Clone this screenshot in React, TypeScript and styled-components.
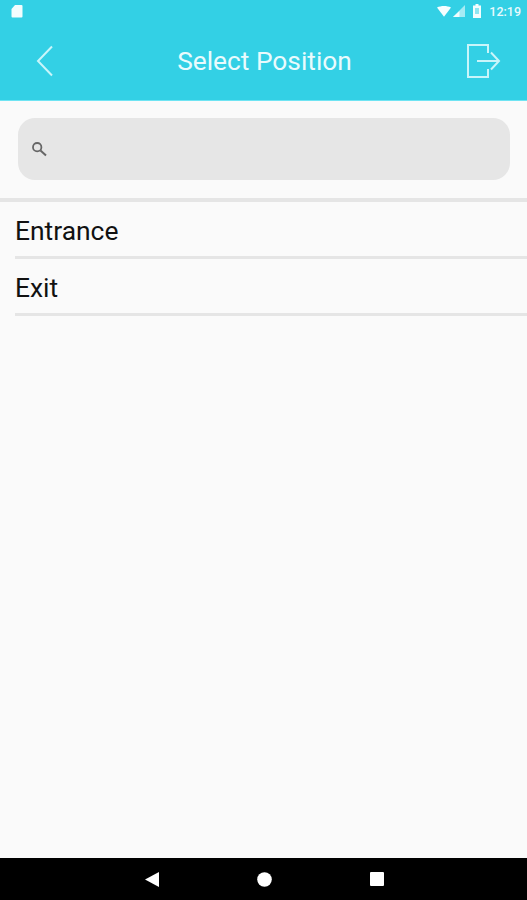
import React from "react";
import styled, { createGlobalStyle } from "styled-components";

const Global = createGlobalStyle`
  html, body { margin: 0; padding: 0; background: #fafafa; }
  #root { width: 527px; height: 900px; }
`;

const Screen = styled.div`
  width: 527px;
  height: 900px;
  display: flex;
  flex-direction: column;
  overflow: hidden;
  background: #fafafa;
  font-family: Roboto, "Liberation Sans", sans-serif;
`;

const Header = styled.header`
  height: 100px;
  flex: none;
  display: flex;
  flex-direction: column;
  background: #33d0e5;
  border-bottom: 1px solid #6fe4f3;
  box-sizing: content-box;
`;

const StatusBar = styled.div`
  height: 22px;
  flex: none;
  display: flex;
  align-items: center;
  justify-content: space-between;
  padding: 0 6px 0 11px;
`;

const StatusRight = styled.div`
  display: flex;
  align-items: center;
`;

const Clock = styled.span`
  color: #e6fafd;
  font-size: 12.5px;
  font-weight: 500;
  margin-left: 8px;
`;

const TitleBar = styled.div`
  flex: 1;
  display: flex;
  align-items: center;
  justify-content: space-between;
  padding: 0 26px 0 36px;
  margin-top: -1px;
`;

const BackIcon = styled.svg`
  margin-right: 10px;
`;

const Title = styled.h1`
  margin: 0;
  color: #e9fbfd;
  font-size: 26.3px;
  font-weight: 400;
  line-height: 32px;
`;

const SearchWrap = styled.div`
  flex: none;
  height: 101px;
  box-sizing: border-box;
  padding: 17px 17px 0 18px;
  border-bottom: 4px solid #e5e5e5;
`;

const SearchBox = styled.div`
  height: 62px;
  box-sizing: border-box;
  display: flex;
  align-items: center;
  padding-left: 13px;
  border-radius: 17px;
  background: #e6e6e6;
`;

const List = styled.ul`
  margin: 0;
  padding: 0 0 0 15px;
  list-style: none;
`;

const Row = styled.li`
  height: 57px;
  box-sizing: border-box;
  display: flex;
  align-items: center;
  padding-top: 3px;
  border-bottom: 3px solid #e5e5e5;
  color: #111;
  font-size: 26.4px;
  line-height: 32px;
`;

const Spacer = styled.div`
  flex: 1;
`;

const NavBar = styled.nav`
  flex: none;
  height: 42px;
  box-sizing: border-box;
  padding-left: 1px;
  display: flex;
  align-items: center;
  justify-content: center;
  gap: 98px;
  background: #000;
`;

export default function App() {
  return (
    <>
      <Global />
      <Screen>
        <Header>
          <StatusBar>
            <svg width="12" height="14" viewBox="0 0 12 14">
              <path d="M4 1h6.500a1 1 0 0 1 1 1v10.500a1 1 0 0 1-1 1h-9a1 1 0 0 1-1-1V5z" fill="#f2fdfe" />
            </svg>
            <StatusRight>
              <svg width="14" height="11" viewBox="0 0 16 12">
                <path d="M0 1.500C4.500-.8 11.500-.8 16 1.500L8 12z" fill="#f6feff" />
              </svg>
              <svg width="12" height="12" viewBox="0 0 13 13" style={{ marginLeft: 2 }}>
                <path d="M13 0v13H0z" fill="#a5ebf4" />
                <path d="M7 6.500V13H0z" fill="#f0fdfe" />
              </svg>
              <svg width="8" height="14" viewBox="0 0 8 14" style={{ marginLeft: 8 }}>
                <path d="M2.500 0h3v1.500H8V14H0V1.500h2.500z" fill="#f2fdfe" />
                <rect x="2" y="4" width="4" height="6" fill="#8fe6f1" />
              </svg>
              <Clock>12:19</Clock>
            </StatusRight>
          </StatusBar>
          <TitleBar>
            <BackIcon width="18" height="32" viewBox="0 0 18 32">
              <path d="M16 1.500 2 16l14 14.500" fill="none" stroke="#c9f5fa" strokeWidth="2" />
            </BackIcon>
            <Title>Select Position</Title>
            <svg width="36" height="36" viewBox="0 0 36 36">
              <path d="M23 10V2H3v32h20v-8" fill="none" stroke="#c9f5fa" strokeWidth="2" />
              <path d="M12 18h22M26 9.500l8 8.500-8 8.500" fill="none" stroke="#c9f5fa" strokeWidth="2" />
            </svg>
          </TitleBar>
        </Header>
        <SearchWrap>
          <SearchBox>
            <svg width="16" height="16" viewBox="0 0 16 16">
              <circle cx="6.200" cy="6.200" r="4.200" fill="none" stroke="#666" strokeWidth="1.800" />
              <path d="M9.500 9.500 15 14.500" stroke="#666" strokeWidth="2" />
            </svg>
          </SearchBox>
        </SearchWrap>
        <List>
          <Row>Entrance</Row>
          <Row>Exit</Row>
        </List>
        <Spacer />
        <NavBar>
          <svg width="14" height="15" viewBox="0 0 14 15">
            <path d="M14 0v15L0 7.500z" fill="#fff" />
          </svg>
          <svg width="15" height="15" viewBox="0 0 15 15">
            <circle cx="7.500" cy="7.500" r="7.300" fill="#fff" />
          </svg>
          <svg width="14" height="14" viewBox="0 0 14 14">
            <rect width="14" height="14" rx="1" fill="#fff" />
          </svg>
        </NavBar>
      </Screen>
    </>
  );
}
